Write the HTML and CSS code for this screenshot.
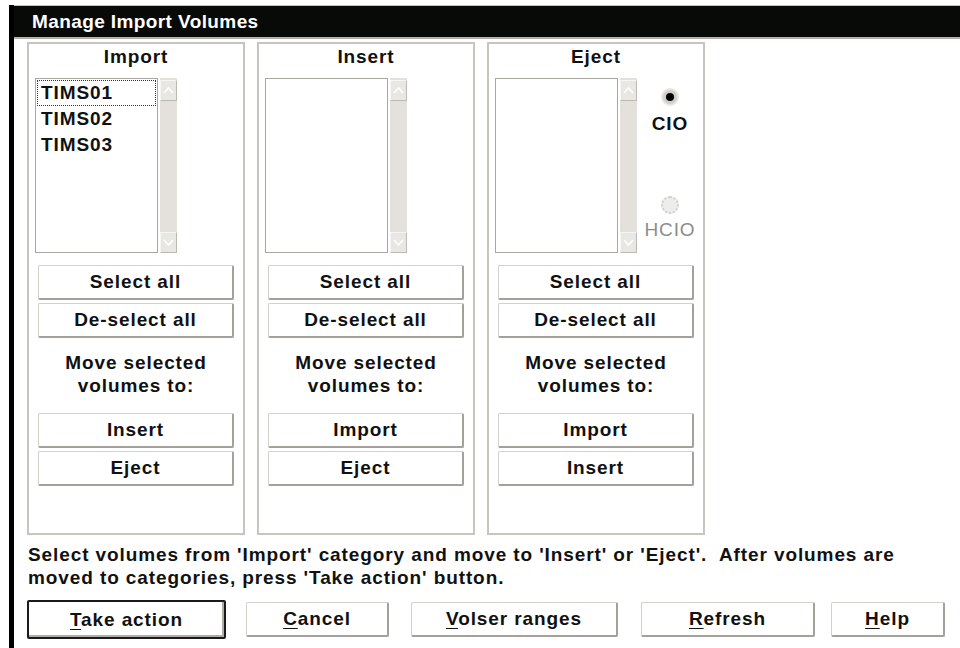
FILE: index.html
```html
<!DOCTYPE html>
<html>
<head>
    <meta charset="utf-8">
    <link rel="stylesheet" href="styles.css">
</head>
<body>
<div class="window">
    <div class="titlebar">Manage Import Volumes</div>
    <div class="client">
        <div class="panels">
            <div class="panel">
                <div class="panel-label">Import</div>
                <div class="list-row">
                    <div class="listbox">
                        <div class="item focus">TIMS01</div>
                        <div class="item">TIMS02</div>
                        <div class="item">TIMS03</div>
                    </div>
                    <div class="scrollbar">
                        <div class="arrow"><svg width="15" height="19" viewBox="0 0 15 19"><polyline points="3,12 7.5,7 12,12" fill="none" stroke="#fff" stroke-width="1.6"/></svg></div>
                        <div class="arrow"><svg width="15" height="19" viewBox="0 0 15 19"><polyline points="3,7 7.5,12 12,7" fill="none" stroke="#fff" stroke-width="1.6"/></svg></div>
                    </div>
                </div>
                <div class="btn-group">
                    <button class="btn">Select all</button>
                    <button class="btn">De-select all</button>
                </div>
                <div class="move-label">Move selected<br>volumes to:</div>
                <div class="btn-group">
                    <button class="btn">Insert</button>
                    <button class="btn">Eject</button>
                </div>
            </div>
            <div class="panel">
                <div class="panel-label">Insert</div>
                <div class="list-row">
                    <div class="listbox"></div>
                    <div class="scrollbar">
                        <div class="arrow"><svg width="15" height="19" viewBox="0 0 15 19"><polyline points="3,12 7.5,7 12,12" fill="none" stroke="#fff" stroke-width="1.6"/></svg></div>
                        <div class="arrow"><svg width="15" height="19" viewBox="0 0 15 19"><polyline points="3,7 7.5,12 12,7" fill="none" stroke="#fff" stroke-width="1.6"/></svg></div>
                    </div>
                </div>
                <div class="btn-group">
                    <button class="btn">Select all</button>
                    <button class="btn">De-select all</button>
                </div>
                <div class="move-label">Move selected<br>volumes to:</div>
                <div class="btn-group">
                    <button class="btn">Import</button>
                    <button class="btn">Eject</button>
                </div>
            </div>
            <div class="panel">
                <div class="panel-label">Eject</div>
                <div class="list-row">
                    <div class="listbox"></div>
                    <div class="scrollbar">
                        <div class="arrow"><svg width="15" height="19" viewBox="0 0 15 19"><polyline points="3,12 7.5,7 12,12" fill="none" stroke="#fff" stroke-width="1.6"/></svg></div>
                        <div class="arrow"><svg width="15" height="19" viewBox="0 0 15 19"><polyline points="3,7 7.5,12 12,7" fill="none" stroke="#fff" stroke-width="1.6"/></svg></div>
                    </div>
                    <div class="radios">
                        <div class="radio checked"><span class="dot"></span></div>
                        <div class="radio-label">CIO</div>
                        <div class="radio disabled"></div>
                        <div class="radio-label disabled">HCIO</div>
                    </div>
                </div>
                <div class="btn-group">
                    <button class="btn">Select all</button>
                    <button class="btn">De-select all</button>
                </div>
                <div class="move-label">Move selected<br>volumes to:</div>
                <div class="btn-group">
                    <button class="btn">Import</button>
                    <button class="btn">Insert</button>
                </div>
            </div>
        </div>
        <p class="hint">Select volumes from 'Import' category and move to 'Insert' or 'Eject'.&nbsp; After volumes are<br>moved to categories, press 'Take action' button.</p>
        <div class="actions">
            <button class="btn default act-take"><u>T</u>ake action</button>
            <button class="btn act-cancel"><u>C</u>ancel</button>
            <button class="btn act-volser"><u>V</u>olser ranges</button>
            <button class="btn act-refresh"><u>R</u>efresh</button>
            <button class="btn act-help"><u>H</u>elp</button>
        </div>
    </div>
</div>
</body>
</html>
```

FILE: styles.css
```css
*{
    box-sizing: border-box;
}
body{
    margin:0;
    background:#fff;
    font-family: "Liberation Sans", Arial, sans-serif;
    font-weight: bold;
    font-size: 19px;
    letter-spacing: 0.9px;
    color:#111;
}
.window{
    margin:5px 0 0 9px;
    height:643px;
    border-left:5px solid #000;
}
.titlebar{
    height:34px;
    border-top:1px solid #c4c0bc;
    border-bottom:2px solid #b4b0ac;
    background:#080a08;
    color:#fff;
    line-height:31px;
    padding-left:18px;
    letter-spacing:0.4px;
}
.client{
    padding:3px 0 0 13px;
}
.panels{
    display:flex;
    gap:12px;
}
.panel{
    width:218px;
    height:493px;
    border:2px solid #c8c4c0;
}
.panel-label{
    text-align:center;
    line-height:26px;
}
.list-row{
    display:flex;
    margin:8px 0 0 6px;
    height:175px;
}
.listbox{
    width:123px;
    border:1px solid #aaa6a2;
    padding:1px;
}
.item{
    line-height:24px;
    padding-left:3px;
    border:1px solid transparent;
}
.item.focus{
    border:1px dotted #333;
}
.scrollbar{
    width:17px;
    margin-left:2px;
    background:#e4e1dd;
    display:flex;
    flex-direction:column;
    justify-content:space-between;
    padding-top:2px;
}
.arrow{
    height:21px;
    background:#e9e7e4;
    border:1px solid;
    border-color:#f6f5f3 #bcb8b4 #bcb8b4 #f6f5f3;
    display:flex;
    align-items:center;
    justify-content:center;
}
.radios{
    flex:1;
    display:flex;
    flex-direction:column;
    align-items:center;
    padding-top:10px;
}
.radio{
    width:18px;
    height:18px;
    border-radius:50%;
    background:#d2cfcb;
    border:2px solid #e8e6e3;
    display:flex;
    align-items:center;
    justify-content:center;
}
.radio .dot{
    width:8px;
    height:8px;
    border-radius:50%;
    background:#000;
}
.radio.disabled{
    margin-top:60px;
    background:#efedeb;
    border:2px dotted #d0cdca;
}
.radio-label{
    line-height:24px;
    margin-top:6px;
}
.radio-label.disabled{
    color:#8c8c8c;
    font-weight:normal;
    margin-top:4px;
}
.btn-group{
    display:flex;
    flex-direction:column;
    gap:3px;
    margin:12px 0 0 9px;
}
.btn{
    width:196px;
    height:35px;
    padding:0;
    font:inherit;
    letter-spacing:inherit;
    color:#111;
    background:#fff;
    border-style:solid;
    border-width:1px 2px 2px 1px;
    border-color:#d4d0cc #a4a09c #a4a09c #d4d0cc;
    border-radius:2px;
}
.btn u{
    text-underline-offset:3px;
}
.move-label{
    text-align:center;
    line-height:23px;
    margin-top:13px;
}
.move-label + .btn-group{
    margin-top:16px;
}
.hint{
    margin:8px 0 0 1px;
    line-height:23px;
    white-space:nowrap;
}
.actions{
    display:flex;
    align-items:center;
    margin-top:11px;
}
.btn.default{
    height:39px;
    border:2px solid #1a1a1a;
    box-shadow:inset -2px -2px 0 #b0aca8;
}
.act-take{width:199px;}
.act-cancel{width:143px; margin-left:20px;}
.act-volser{width:207px; margin-left:22px;}
.act-refresh{width:174px; margin-left:23px;}
.act-help{width:114px; margin-left:16px;}
```
